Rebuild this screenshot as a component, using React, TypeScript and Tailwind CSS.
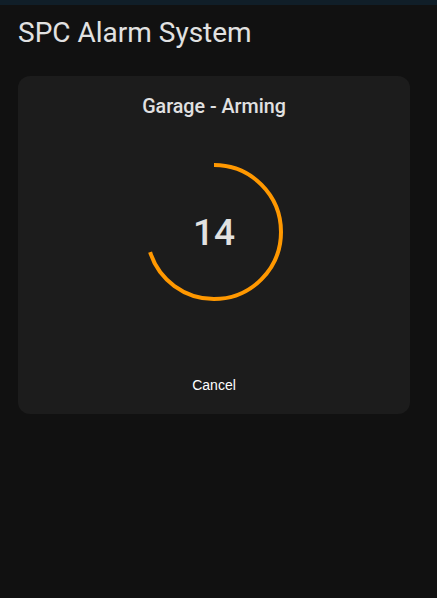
import React from "react";

export default function App() {
  const r = 67;
  const c = 2 * Math.PI * r;
  const frac = 0.7;
  return (
    <div className="w-[437px] h-[598px] bg-[#111111] flex flex-col" style={{ fontFamily: "Roboto, sans-serif" }}>
      <div className="h-[5px] bg-[#101e28]" />
      <div className="px-[18px] pt-[9px] h-[71px] text-[28px] leading-[38px] text-[#e1e1e1]">SPC Alarm System</div>
      <div className="ml-[18px] w-[392px] h-[338px] bg-[#1c1c1c] rounded-[12px] flex flex-col items-center">
        <div className="mt-[17px] text-[19.7px] leading-[28px] font-medium text-[#e1e1e1]">Garage - Arming</div>
        <div className="relative mt-[41px] w-[140px] h-[140px] flex items-center justify-center">
          <svg width="140" height="140" viewBox="0 0 140 140" className="absolute inset-0">
            <circle
              cx="70"
              cy="70"
              r={r}
              fill="none"
              stroke="#ff9800"
              strokeWidth="4"
              strokeDasharray={`${c * frac} ${c}`}
              transform="rotate(-90 70 70)"
            />
          </svg>
          <span className="text-[37px] leading-none font-medium text-[#e1e1e1] relative">14</span>
        </div>
        <button className="mt-[73px] text-[14px] leading-[20px] text-white" style={{ fontFamily: "'Liberation Sans', Arial, sans-serif" }}>
          Cancel
        </button>
      </div>
    </div>
  );
}
